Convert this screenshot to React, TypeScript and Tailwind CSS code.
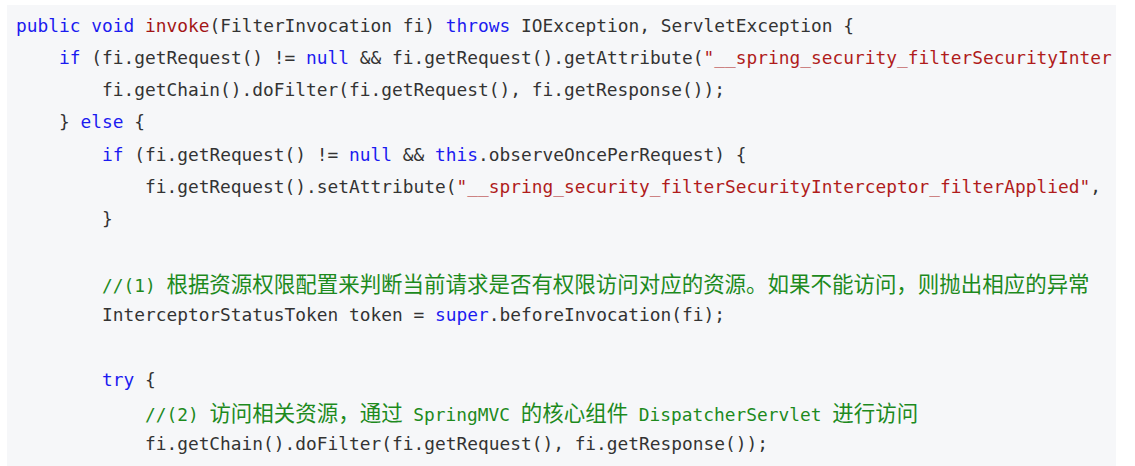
import React from "react";

type Tok = [string, string?];

const K = "text-[#1b1bf0]";
const F = "text-[#a31515]";
const S = "text-[#b01c1c]";
const C = "text-[#1d8a1d]";

const lines: Tok[][] = [
  [["public", K], [" "], ["void", K], [" "], ["invoke", F], ["(FilterInvocation fi) "], ["throws", K], [" IOException, ServletException {"]],
  [["    "], ["if", K], [" (fi.getRequest() != "], ["null", K], [" && fi.getRequest().getAttribute("], ['"__spring_security_filterSecurityInterceptor_filterApplied"', S], [") != "], ["null", K], [" && "], ["this", K], [".observeOncePerRequest) {"]],
  [["        fi.getChain().doFilter(fi.getRequest(), fi.getResponse());"]],
  [["    } "], ["else", K], [" {"]],
  [["        "], ["if", K], [" (fi.getRequest() != "], ["null", K], [" && "], ["this", K], [".observeOncePerRequest) {"]],
  [["            fi.getRequest().setAttribute("], ['"__spring_security_filterSecurityInterceptor_filterApplied"', S], [", Boolean.TRUE);"]],
  [["        }"]],
  [[""]],
  [["        "], ["//(1) 根据资源权限配置来判断当前请求是否有权限访问对应的资源。如果不能访问，则抛出相应的异常", C]],
  [["        InterceptorStatusToken token = "], ["super", K], [".beforeInvocation(fi);"]],
  [[""]],
  [["        "], ["try", K], [" {"]],
  [["            "], ["//(2) 访问相关资源，通过 SpringMVC 的核心组件 DispatcherServlet 进行访问", C]],
  [["            fi.getChain().doFilter(fi.getRequest(), fi.getResponse());"]],
];

const cjk = /([\u3000-\u303f\u3400-\u9fff\uff00-\uffef]+)/;

function Piece({ text, color }: { text: string; color?: string }) {
  const parts = text.split(cjk).filter((p) => p.length > 0);
  return (
    <span className={color ?? "text-[#333333]"}>
      {parts.map((p, i) =>
        cjk.test(p) ? (
          <span key={i} className="font-['Noto_Sans_CJK_SC',sans-serif] text-[21.48px]">
            {p}
          </span>
        ) : (
          <span key={i}>{p}</span>
        )
      )}
    </span>
  );
}

export default function App() {
  return (
    <div className="w-[1135px] h-[466px] bg-white pl-[7px] pt-[5px] pr-[19px]">
      <div className="h-[461px] bg-[#f6f7f9] pl-[9px] pr-[4px] pt-[5px]">
        <div className="overflow-hidden h-full font-['DejaVu_Sans_Mono',monospace] text-[17.85px]">
          {lines.map((toks, i) => (
            <div key={i} className="h-[32.15px] leading-[32.15px] whitespace-pre">
              {toks.map((t, j) => (
                <Piece key={j} text={t[0]} color={t[1]} />
              ))}
            </div>
          ))}
        </div>
      </div>
    </div>
  );
}
